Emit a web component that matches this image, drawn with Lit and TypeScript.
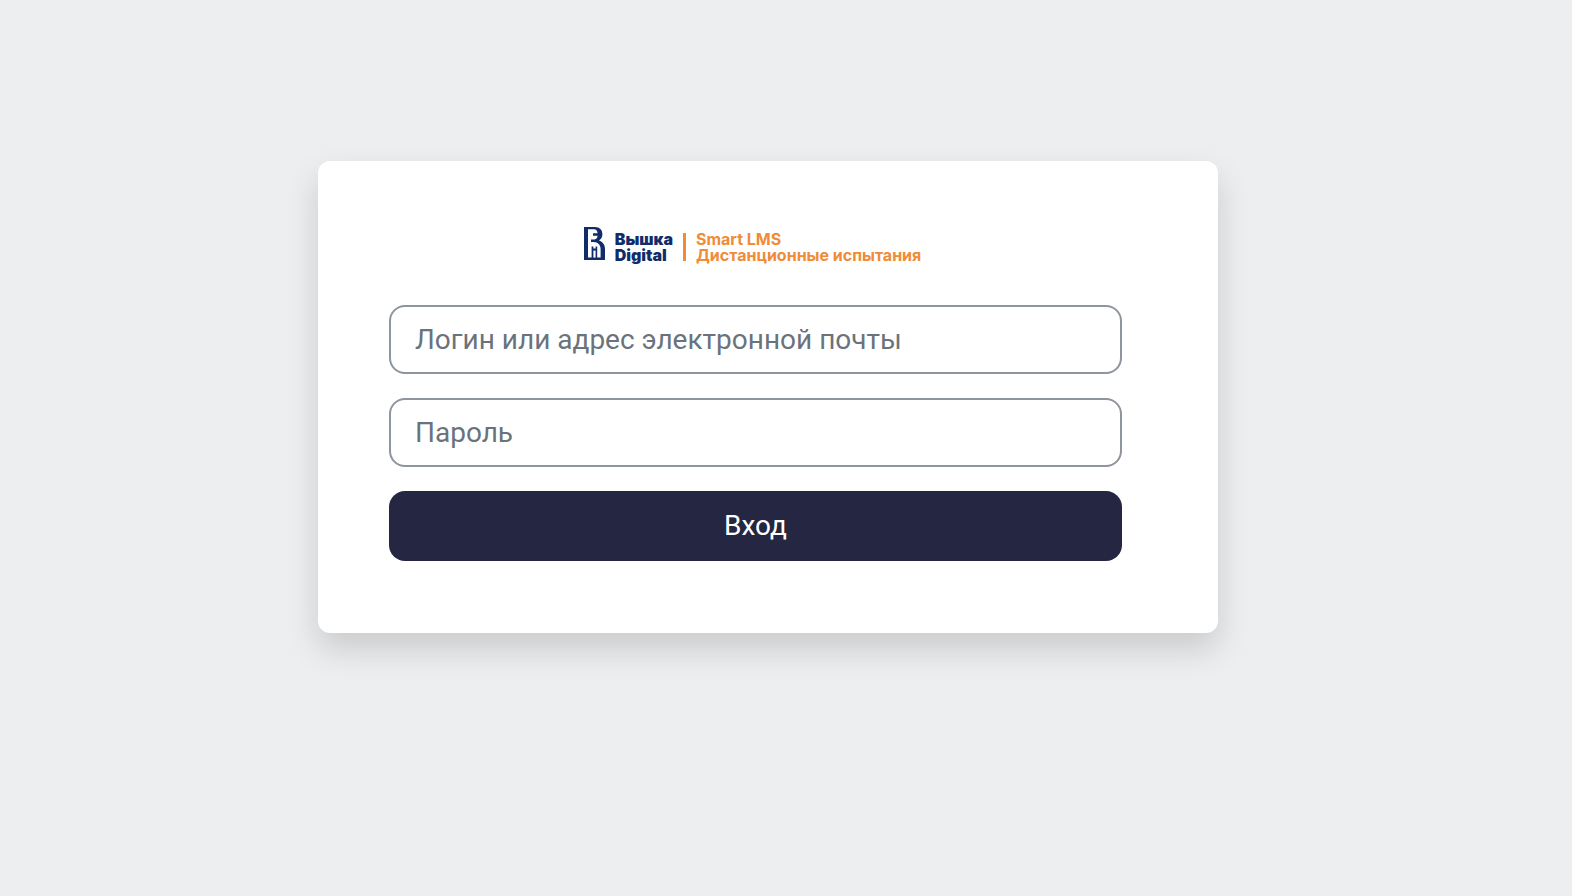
import { LitElement, html, css } from "lit";
import { customElement } from "lit/decorators.js";

@customElement("brand-logo")
class BrandLogo extends LitElement {
  static styles = css`
    :host { display: flex; align-items: flex-end; line-height: 16px; font-size: 16px; font-family: "Inter", sans-serif; white-space: nowrap; }
    .mark { display: block; width: 21px; height: 33px; margin: 0 10px 3px 0; }
    .name { color: #102d69; font-weight: 900; }
    .rule { width: 3px; height: 28px; margin: 0 10px 2px; background: #f08b37; }
    .product { color: #f08b37; font-weight: 700; }
    span { display: block; }
  `;
  render() {
    return html`
      <svg class="mark" viewBox="0 0 21 33" aria-hidden="true">
        <path fill="#102d69" d="M0 0H11C15.6 0 18.4 3 18.4 7.2C18.4 10 17.2 12 15 13.6C18.8 15 21 18 21 22V33H0Z"/>
        <path fill="#fff" d="M4 2.2H10C12 2.2 13.4 3.8 13.6 6.2H9V8.8H13.6C13.4 10.8 12.4 12.2 10.6 12.4H7V15H9.6C14 15 16.6 18 16.6 22V30.6H13.2V19.4H11.6V21.4H9.4V19.4H7.6V30.6H4Z"/>
        <path fill="#fff" d="M9.4 23.6H11.6V30.6H9.4Z"/>
      </svg>
      <div class="name"><span>Вышка</span><span>Digital</span></div>
      <div class="rule"></div>
      <div class="product"><span>Smart LMS</span><span>Дистанционные испытания</span></div>
    `;
  }
}

@customElement("app-root")
class AppRoot extends LitElement {
  static styles = css`
    * { box-sizing: border-box; }
    :host {
      display: flex; justify-content: center; align-items: flex-start; box-sizing: border-box;
      min-height: 100vh; padding: 161px 36px 24px 0; background: #edeef0;
      font-family: Roboto, sans-serif; font-size: 28px; line-height: 42px;
    }
    .card {
      width: 100%; max-width: 900px; padding: 66px 96px 72px 71px; background: #fff;
      border-radius: 12px; box-shadow: 0 16px 32px rgba(0, 0, 0, 0.15);
    }
    .brand { display: flex; justify-content: center; margin: 0 0 42px; padding: 0 6px 0 0; }
    form { display: flex; flex-direction: column; gap: 24px; }
    input, button { width: 100%; font: inherit; border-radius: 16px; margin: 0; }
    input { height: 69px; padding: 0 24px; border: 2px solid #8f959e; color: #495057; background: #fff; }
    input::placeholder { color: #6a737b; opacity: 1; }
    button { height: 70px; border: 0; color: #fff; background: #252641; cursor: pointer; }
  `;
  render() {
    return html`
      <main class="card">
        <div class="brand"><brand-logo></brand-logo></div>
        <form @submit=${(e: Event) => e.preventDefault()}>
          <input type="text" autocomplete="username" aria-label="Логин или адрес электронной почты" placeholder="Логин или адрес электронной почты">
          <input type="password" autocomplete="current-password" aria-label="Пароль" placeholder="Пароль">
          <button type="submit">Вход</button>
        </form>
      </main>
    `;
  }
}
